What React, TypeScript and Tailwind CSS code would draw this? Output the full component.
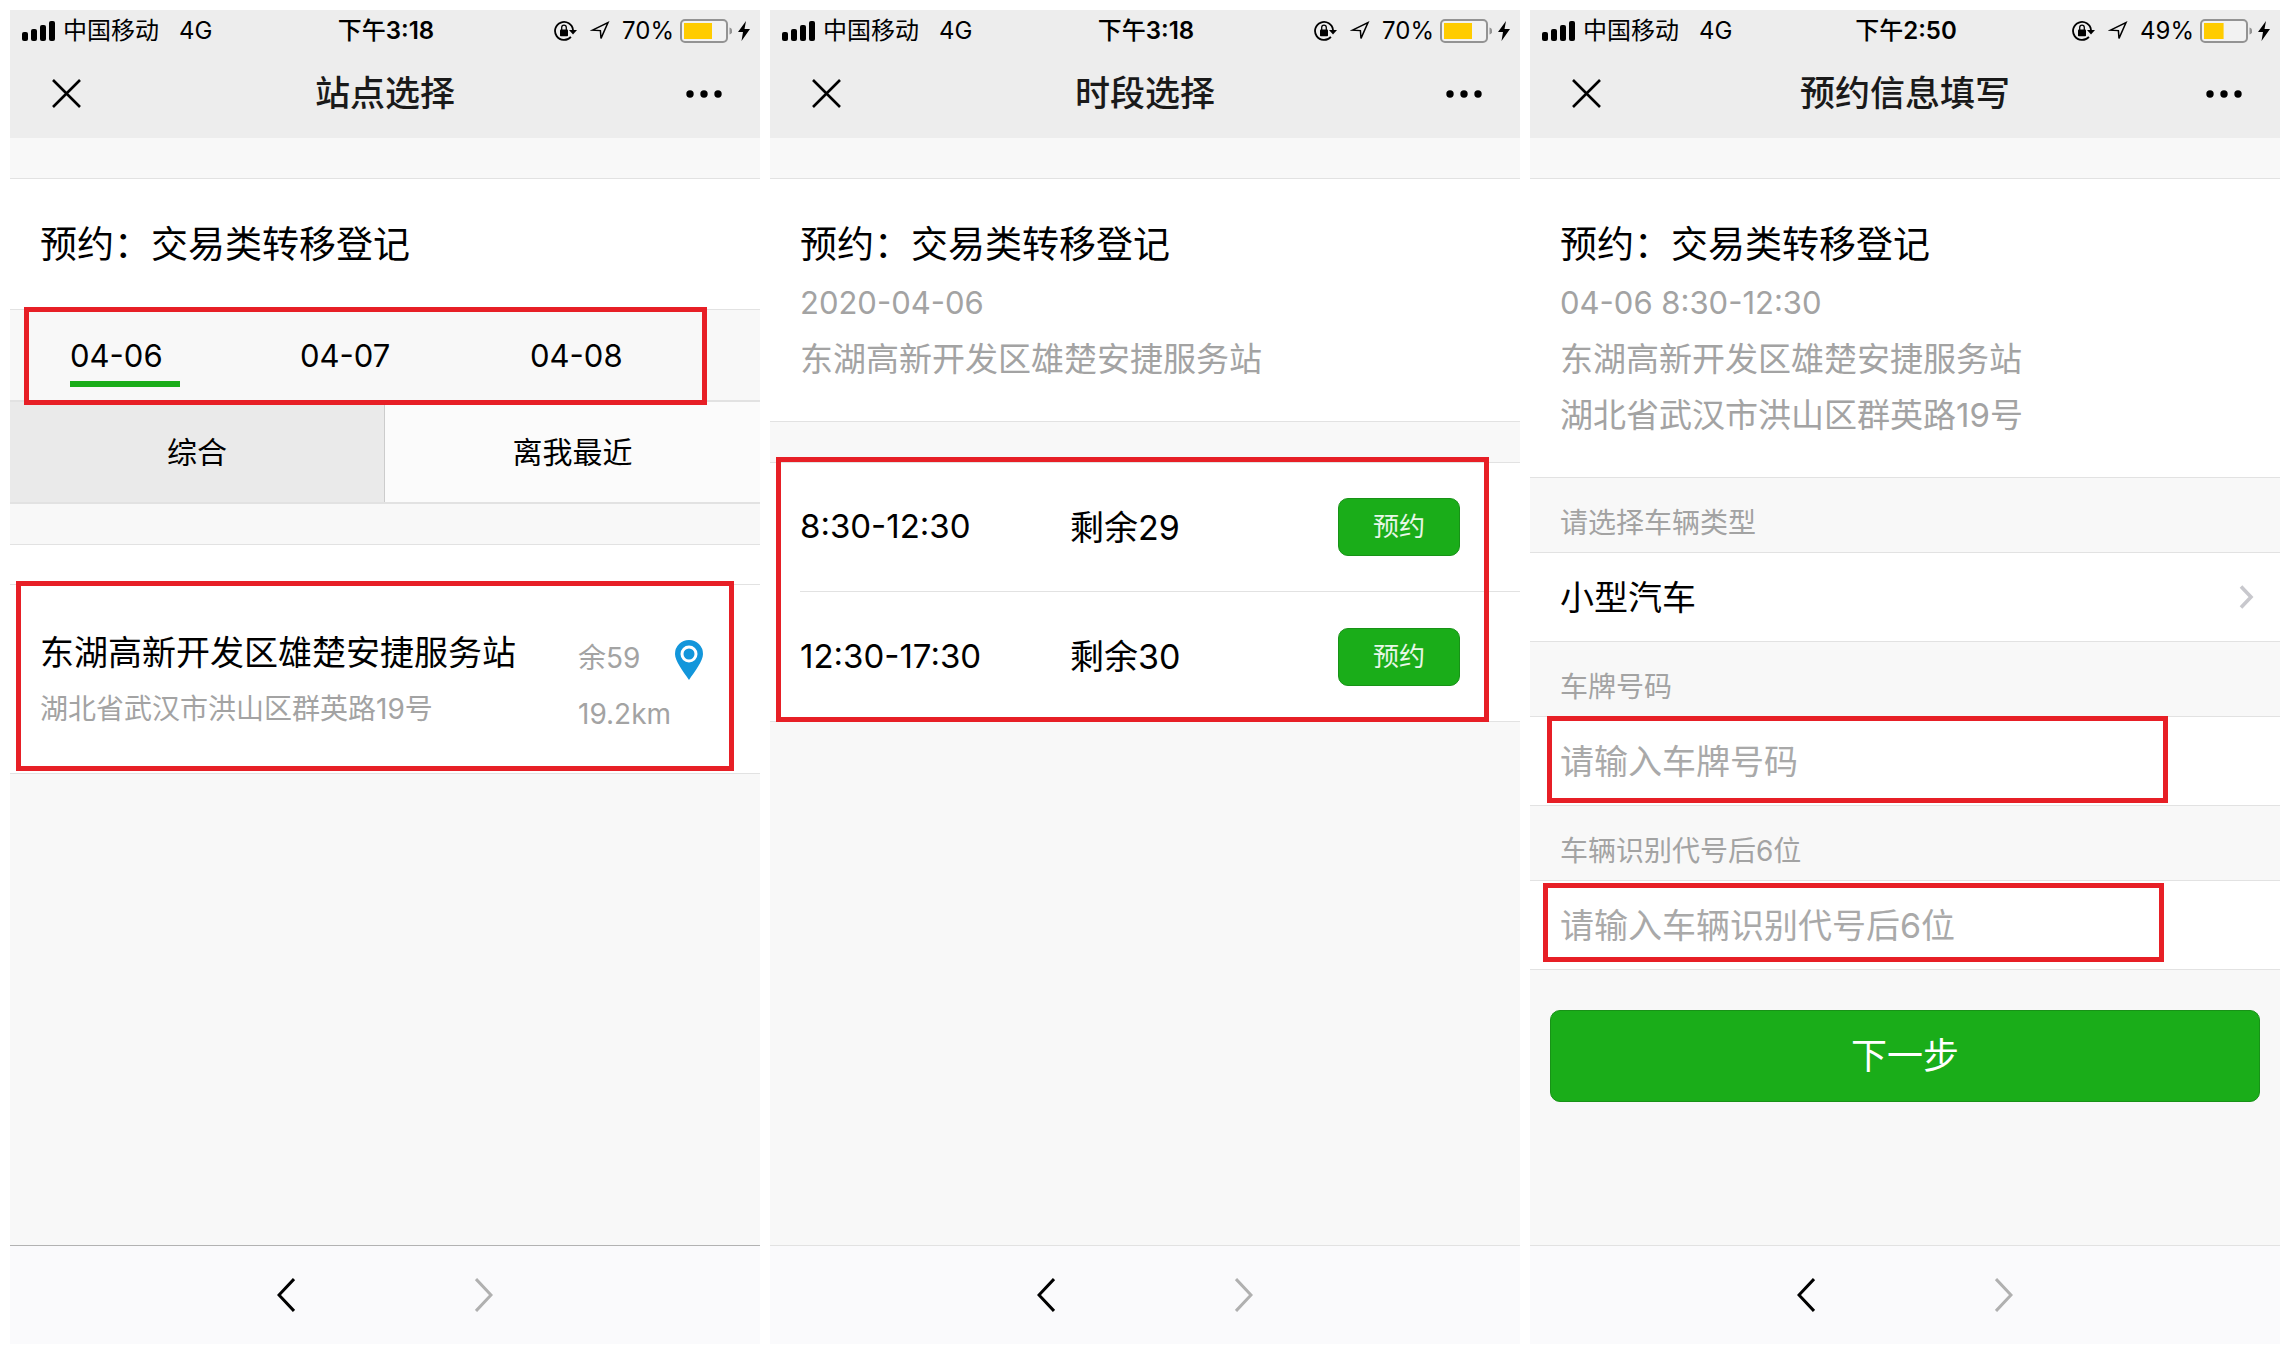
import { FC, ReactNode } from "react";

const font = "font-['Inter','Noto_Sans_CJK_SC',sans-serif]";

const StatusBar: FC<{ clock: string; battery: number }> = ({ clock, battery }) => (
    <div className="grid grid-cols-[1fr_auto_1fr] items-center h-[42px] pl-3 pr-[10px] text-[24px] leading-none">
        <div className="flex items-center gap-2">
            <svg width="33" height="20" viewBox="0 0 33 20" aria-hidden="true">
                <rect x="0" y="11" width="6" height="9" rx="2" />
                <rect x="9" y="8" width="6" height="12" rx="2" />
                <rect x="18" y="4" width="6" height="16" rx="2" />
                <rect x="27" y="0" width="6" height="20" rx="2" />
            </svg>
            <span>中国移动</span>
            <span className="ml-3">4G</span>
        </div>
        <span className="font-medium">下午<span className="font-semibold">{clock}</span></span>
        <div className="flex items-center justify-end">
            <svg width="24" height="22" viewBox="0 0 24 22" fill="none" stroke="#000" strokeWidth="1.8" aria-hidden="true">
                <path d="M16.900 16.800A9 9 0 1 1 19 10" />
                <path d="M15 10h8l-4 4.500z" fill="#000" stroke="none" />
                <rect x="6" y="9.500" width="8" height="6.800" rx="0.8" fill="#000" stroke="none" />
                <path d="M7.700 10V7.500a2.300 2.300 0 0 1 4.600 0V10" strokeWidth="1.3" />
            </svg>
            <svg className="ml-3" width="20" height="20" viewBox="0 0 20 20" fill="none" stroke="#000" strokeWidth="1.5" aria-hidden="true">
                <path d="M2.500 9.200 18 1.600l-7 15.800-.6-7.800z" />
            </svg>
            <span className="ml-3">{battery}%</span>
            <svg className="ml-1.5" width="52" height="24" viewBox="0 0 52 24" aria-hidden="true">
                <rect x="1" y="1" width="46" height="22" rx="4" fill="#f2f2f2" stroke="#939393" strokeWidth="2" />
                <rect x="4" y="4" width={battery * 0.4} height="16" fill="#fc0" />
                <path d="M49.500 8.500a3.600 3.600 0 0 1 0 7z" fill="#939393" />
            </svg>
            <svg className="ml-1.5" width="12" height="20" viewBox="0 0 12 20" aria-hidden="true">
                <path d="M8 0 0 11h5L3.500 20 12 8H6.500z" />
            </svg>
        </div>
    </div>
);

const Phone: FC<{ title: string; clock: string; battery: number; footerLine: string; children: ReactNode }> = ({
    title,
    clock,
    battery,
    footerLine,
    children
}) => (
    <section className="flex flex-col min-w-0 bg-[#f8f8f8]">
        <header className="h-32 bg-[#ededed]">
            <StatusBar clock={clock} battery={battery} />
            <div className="grid grid-cols-[1fr_auto_1fr] items-center h-[83px] px-10">
                <button type="button" aria-label="关闭" className="justify-self-start">
                    <svg width="31" height="29" viewBox="-2 0 31 29" fill="none" stroke="#000" strokeWidth="2.6">
                        <path d="M1 1l27 27M28 1 1 28" />
                    </svg>
                </button>
                <h1 className="text-[35px] leading-none font-medium text-[#1a1a1a]">{title}</h1>
                <button type="button" aria-label="更多" className="justify-self-end">
                    <svg width="34" height="8" viewBox="0 0 34 8" className="overflow-visible">
                        <circle cx="4" cy="4" r="3.700" />
                        <circle cx="18" cy="4" r="3.700" />
                        <circle cx="32" cy="4" r="3.700" />
                    </svg>
                </button>
            </div>
        </header>
        <main className="pt-10">{children}</main>
        <footer className={`flex justify-center gap-[180px] items-center h-[99px] mt-auto border-t bg-[#fafafc] ${footerLine}`}>
            <button type="button" aria-label="后退">
                <svg width="18" height="34" viewBox="0 0 18 34" fill="none" stroke="#000" strokeWidth="3">
                    <path d="M17 1 2 17l15 16" />
                </svg>
            </button>
            <button type="button" aria-label="前进" disabled>
                <svg width="18" height="34" viewBox="0 0 18 34" fill="none" stroke="#b0b0b0" strokeWidth="3">
                    <path d="M1 1l15 16L1 33" />
                </svg>
            </button>
        </footer>
    </section>
);

// red frame laid over the part a user has to act on
const Mark: FC<{ className: string }> = ({ className }) => (
    <div aria-hidden="true" className={`absolute pointer-events-none border-[5px] border-[#e71f26] ${className}`} />
);

const Summary: FC<{ date?: string; lines?: string[] }> = ({ date, lines = [] }) => (
    <div className="border-y border-[#e2e2e2] bg-white px-[30px] pt-[35px] pb-[34px] text-[#a3a3a3]">
        <h2 className="text-[37px] leading-[61px] text-black">预约：交易类转移登记</h2>
        {date && <p className="text-[31px] leading-[56px]">{date}</p>}
        {lines.map((line) => (
            <p key={line} className="text-[33px] leading-[56px]">{line}</p>
        ))}
    </div>
);

const StationPage: FC = () => (
    <Phone title="站点选择" clock="3:18" battery={70} footerLine="border-[#b2b2b2]">
        <Summary />
        <div className="relative border-b-2 border-[#e2e2e2] h-[92px] pl-[60px] flex">
            {["04-06", "04-07", "04-08"].map((day, i) => (
                <button key={day} type="button" className="flex flex-col w-[230px] pt-5 items-start text-[31px] leading-[51px]">
                    {day}
                    {i === 0 && <span className="w-[110px] h-[6px] bg-[#1aad19]" />}
                </button>
            ))}
            <Mark className="left-[14px] -top-[3px] w-[683px] h-[98px]" />
        </div>
        <div className="grid grid-cols-2 h-[102px] border-b-2 border-[#e2e2e2] text-[30px]">
            <button type="button" className="bg-[#eaeaea] border-r border-[#ccc]">综合</button>
            <button type="button" className="bg-[#fbfbfb]">离我最近</button>
        </div>
        <div className="mt-10 border-y border-[#e2e2e2] bg-white h-[230px]">
            <div className="relative mt-[39px] border-t border-[#e2e2e2] px-[30px] pt-10 flex">
                <div className="w-[538px]">
                    <h3 className="text-[34px] leading-[56px]">东湖高新开发区雄楚安捷服务站</h3>
                    <p className="text-[28px] leading-[56px] text-[#a3a3a3]">湖北省武汉市洪山区群英路19号</p>
                </div>
                <div className="w-[97px] pt-[5px] text-[28px] leading-[56px] text-[#a3a3a3]">
                    <p>余59</p>
                    <p>19.2km</p>
                </div>
                <a href="#map" aria-label="地图" className="mt-[15px]">
                    <svg width="28" height="40" viewBox="0 0 28 40">
                        <path d="M14 0a14 14 0 0 1 14 14c0 7-8 17-14 26C8 31 0 21 0 14A14 14 0 0 1 14 0z" fill="#1296db" />
                        <circle cx="14" cy="14" r="7" fill="#1296db" stroke="#fff" strokeWidth="3" />
                    </svg>
                </a>
                <Mark className="left-[6px] -top-[4px] w-[718px] h-[190px]" />
            </div>
        </div>
    </Phone>
);

const slots = [
    { time: "8:30-12:30", left: 29 },
    { time: "12:30-17:30", left: 30 }
];

const SlotPage: FC = () => (
    <Phone title="时段选择" clock="3:18" battery={70} footerLine="border-[#e2e2e2]">
        <Summary date="2020-04-06" lines={["东湖高新开发区雄楚安捷服务站"]} />
        <div className="relative mt-10 border-y border-[#e2e2e2] bg-white pl-[30px]">
            <ul className="divide-y divide-[#e2e2e2]">
                {slots.map((slot) => (
                    <li key={slot.time} className="flex items-center h-[129px] pr-[60px]">
                        <span className="w-[270px] text-[33px]">{slot.time}</span>
                        <span className="text-[34px]">剩余{slot.left}</span>
                        <button type="button" className="ml-auto w-[122px] h-[58px] rounded-[10px] border border-[#189217] bg-[#1aad19] text-[26px] leading-none text-white/90">
                            预约
                        </button>
                    </li>
                ))}
            </ul>
            <Mark className="left-[6px] -top-[6px] w-[713px] h-[265px]" />
        </div>
    </Phone>
);

const labelClass = "block px-[30px] pt-4 h-[74px] text-[28px] leading-[58px] text-[#a3a3a3]";
const inputClass = "block w-full h-[88px] px-[30px] text-[34px] outline-none placeholder:text-[#a9a9a9]";

const FormPage: FC = () => (
    <Phone title="预约信息填写" clock="2:50" battery={49} footerLine="border-[#e2e2e2]">
        <Summary date="04-06 8:30-12:30" lines={["东湖高新开发区雄楚安捷服务站", "湖北省武汉市洪山区群英路19号"]} />
        <form>
            <label htmlFor="kind" className={labelClass}>请选择车辆类型</label>
            <button id="kind" type="button" className="flex items-center justify-between w-full h-[90px] border-y border-[#e2e2e2] bg-white pl-[30px] pr-[26px] text-[34px]">
                小型汽车
                <svg width="15" height="24" viewBox="0 0 15 24" fill="none" stroke="#c8c8cd" strokeWidth="3.6">
                    <path d="M2 1.500 12 12 2 22.500" />
                </svg>
            </button>
            <label htmlFor="plate" className={labelClass}>车牌号码</label>
            <div className="relative border-y border-[#e2e2e2] bg-white">
                <input id="plate" placeholder="请输入车牌号码" className={inputClass} />
                <Mark className="left-[17px] -top-[1px] w-[621px] h-[87px]" />
            </div>
            <label htmlFor="vin" className={labelClass}>车辆识别代号后6位</label>
            <div className="relative border-y border-[#e2e2e2] bg-white">
                <input id="vin" placeholder="请输入车辆识别代号后6位" className={inputClass} />
                <Mark className="left-[13px] top-[2px] w-[621px] h-[79px]" />
            </div>
            <div className="px-5 pt-10">
                <button type="submit" className="w-full h-[92px] rounded-[10px] border border-[#189217] bg-[#1aad19] text-[36px] text-white">
                    下一步
                </button>
            </div>
        </form>
    </Phone>
);

const App: FC = () => (
    <div className={`grid grid-cols-3 gap-[10px] min-h-screen p-[10px] bg-white text-black ${font}`}>
        <StationPage />
        <SlotPage />
        <FormPage />
    </div>
);

export default App;
